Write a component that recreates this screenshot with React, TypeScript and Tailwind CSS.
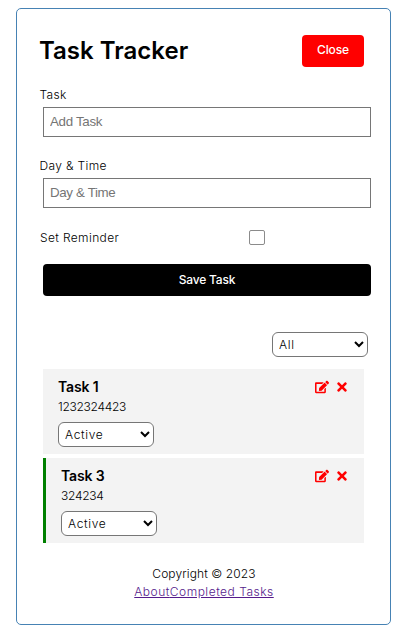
import { FaEdit, FaTimes } from 'react-icons/fa';

const selectStyle =
  'block h-[25px] w-24 rounded-[6px] border border-[#767676] bg-white pl-[2px] text-[12px] font-light tracking-[0.65px] text-black';

function Field({ label, placeholder, inputClass }: { label: string; placeholder: string; inputClass: string }) {
  return (
    <div>
      <label className="-ml-px block h-[21px] pl-[0.5px] text-[12px] leading-[18px] font-light tracking-[0.35px]">{label}</label>
      <input
        type="text"
        placeholder={placeholder}
        className={`ml-[3px] block h-[30px] w-[328px] border border-[#767676] bg-white pr-[6px] pb-px pl-[6px] font-['Liberation_Sans',Arial,sans-serif] text-[13.33px] text-black placeholder:text-[#757575] ${inputClass}`}
      />
    </div>
  );
}

function Task({ title, day, reminder }: { title: string; day: string; reminder?: boolean }) {
  return (
    <div className={`h-[85px] w-[321px] bg-[#f3f3f3] pt-[9px] pr-[15px] pl-[15px] ${reminder ? 'border-l-[3px] border-[#008000]' : ''}`}>
      <div className="flex h-[18px] items-center justify-between">
        <h3 className="text-[14px] leading-[18px] font-semibold tracking-[-0.15px]">{title}</h3>
        <div className="flex items-center gap-[6px] text-[#ff0000]">
          <FaEdit size={14} />
          <FaTimes size={14} />
        </div>
      </div>
      <p className="mt-px text-[12px] leading-[19px] font-light tracking-[-0.28px]">{day}</p>
      <select className={`${selectStyle} mt-[6px]`}>
        <option>Active</option>
        <option>Completed</option>
      </select>
    </div>
  );
}

export default function App() {
  return (
    <div className="h-[638px] bg-white px-4 pt-2 font-['Inter',sans-serif] text-black">
      <main className="h-[617px] w-[375px] rounded-[5px] border border-[#4682b4] pt-[26px] pl-[23px]">
        <header className="flex h-8 w-[324px] items-center justify-between">
          <h1 className="-ml-px text-[24px] leading-8 font-semibold tracking-[0px] whitespace-nowrap">Task Tracker</h1>
          <button className="h-8 w-[62px] rounded-[4px] bg-[#ff0000] pb-[2px] text-[12px] font-medium tracking-[-0.1px] text-white">Close</button>
        </header>
        <form className="mt-[19px]">
          <Field label="Task" placeholder="Add Task" inputClass="tracking-[-0.3px]" />
          <div className="mt-5">
            <Field label="Day &amp; Time" placeholder="Day &amp; Time" inputClass="tracking-[-0.35px]" />
          </div>
          <div className="mt-[21px] flex h-[18px] items-center">
            <label className="w-[209px] text-[12px] font-light tracking-[0.37px]">Set Reminder</label>
            <input type="checkbox" className="-mt-px h-[15px] w-4 appearance-none rounded-[2px] border border-[#8b8b8b] bg-white" />
          </div>
          <button type="button" className="mt-[17px] ml-[3px] block h-8 w-[328px] rounded-[4px] bg-black text-[12px] font-medium tracking-[-0.2px] text-white">
            Save Task
          </button>
        </form>
        <div className="mt-9 flex w-[328px] justify-end">
          <select className={selectStyle}>
            <option>All</option>
            <option>Active</option>
            <option>Completed</option>
          </select>
        </div>
        <section className="mt-3 ml-[3px] flex flex-col gap-1">
          <Task title="Task 1" day="1232324423" />
          <Task title="Task 3" day="324234" reminder />
        </section>
        <footer className="mt-[22px] w-[328px] text-center text-[12px] leading-[18px] font-light">
          <p className="tracking-[0.1px]">Copyright © 2023</p>
          <p className="tracking-[0.5px] text-[#551a8b]">
            <a href="#about" className="underline">About</a>
            <a href="#completed" className="underline">Completed Tasks</a>
          </p>
        </footer>
      </main>
    </div>
  );
}
